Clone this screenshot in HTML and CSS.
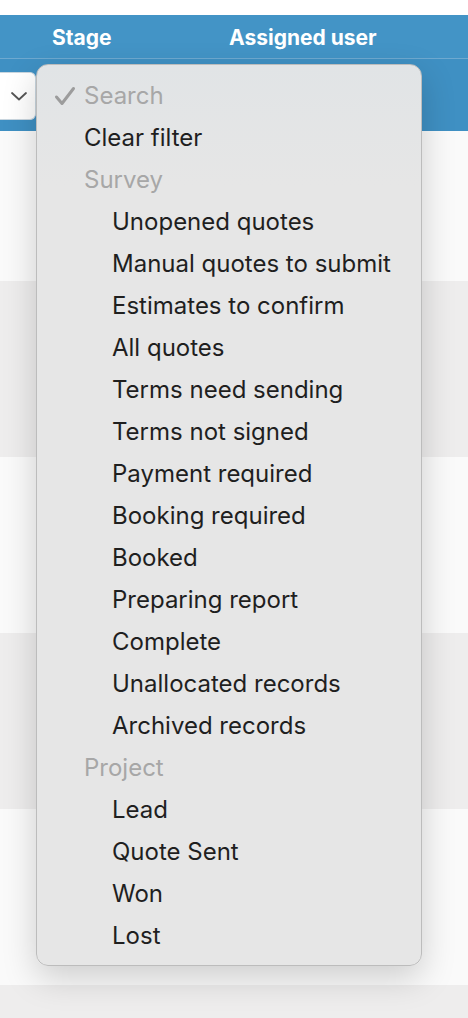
FILE: index.html
```html
<!DOCTYPE html>
<html lang="en">
<head>
	<meta charset="UTF-8">
	<title>Records</title>
	<link rel="stylesheet" href="styles.css">
</head>
<body>
	<div class="page">
		<div class="table-head">
			<div class="col col-stage">Stage</div>
			<div class="col col-user">Assigned user</div>
		</div>
		<div class="filter-row">
			<div class="select-box">
				<svg width="18" height="12" viewBox="0 0 18 12"><path d="M2 3 L9 9.5 L16 3" fill="none" stroke="#555" stroke-width="1.8" stroke-linecap="round" stroke-linejoin="round"/></svg>
			</div>
		</div>
		<div class="row first"></div>
		<div class="row alt"></div>
		<div class="row"></div>
		<div class="row alt"></div>
		<div class="row"></div>
		<div class="row alt"></div>

		<ul class="menu">
			<li class="item muted checked">
				<svg class="check" width="22" height="20" viewBox="0 0 22 20"><path d="M2.5 11 L8 17.5 L19.5 2.5" fill="none" stroke="#9c9c9c" stroke-width="3" stroke-linecap="round" stroke-linejoin="round"/></svg>
				Search
			</li>
			<li class="item">Clear filter</li>
			<li class="item muted">Survey</li>
			<li class="item sub">Unopened quotes</li>
			<li class="item sub">Manual quotes to submit</li>
			<li class="item sub">Estimates to confirm</li>
			<li class="item sub">All quotes</li>
			<li class="item sub">Terms need sending</li>
			<li class="item sub">Terms not signed</li>
			<li class="item sub">Payment required</li>
			<li class="item sub">Booking required</li>
			<li class="item sub">Booked</li>
			<li class="item sub">Preparing report</li>
			<li class="item sub">Complete</li>
			<li class="item sub">Unallocated records</li>
			<li class="item sub">Archived records</li>
			<li class="item muted">Project</li>
			<li class="item sub">Lead</li>
			<li class="item sub">Quote Sent</li>
			<li class="item sub">Won</li>
			<li class="item sub">Lost</li>
		</ul>
	</div>
</body>
</html>
```

FILE: styles.css
```css
*{
	margin:0;
	padding:0;
	box-sizing:border-box;
}

body{
	background:#fff;
	font-family:"Inter","Liberation Sans",sans-serif;
}

.page{
	position:relative;
	padding-top:15px;
	overflow:hidden;
	height:1018px;
}

.table-head{
	display:flex;
	align-items:center;
	height:44px;
	padding-top:2px;
	background:#4394c6;
	border-bottom:1px solid #6ea9d0;
	color:#fff;
	font-weight:700;
	font-size:21px;
}

.col-stage{
	margin-left:52px;
	width:177px;
}

.filter-row{
	display:flex;
	align-items:center;
	height:72px;
	background:#3f90c3;
	padding-top:1px;
}

.select-box{
	display:flex;
	align-items:center;
	justify-content:flex-end;
	width:36px;
	height:48px;
	padding-right:7px;
	background:#fff;
	border:1px solid #c9d6df;
	border-left:none;
	border-radius:0 6px 6px 0;
}

.row{
	height:176px;
	background:#fafafa;
}

.row.first{
	height:150px;
}

.row.alt{
	background:#eeeded;
}

.menu{
	position:absolute;
	top:64px;
	left:36px;
	width:386px;
	height:902px;
	list-style:none;
	padding:10px 0 9px;
	background:linear-gradient(#e1e4e6, #e6e6e6 120px);
	border:1px solid #bcbcbc;
	border-radius:12px;
	box-shadow:0 12px 34px rgba(0,0,0,0.18);
	font-size:24px;
	color:#1f1f1f;
}

.item{
	height:42px;
	line-height:42px;
	padding-left:47px;
	white-space:nowrap;
}

.item.sub{
	padding-left:75px;
}

.item.muted{
	color:#a7a7a7;
}

.item.checked{
	position:relative;
}

.check{
	position:absolute;
	left:17px;
	top:11px;
}
```
